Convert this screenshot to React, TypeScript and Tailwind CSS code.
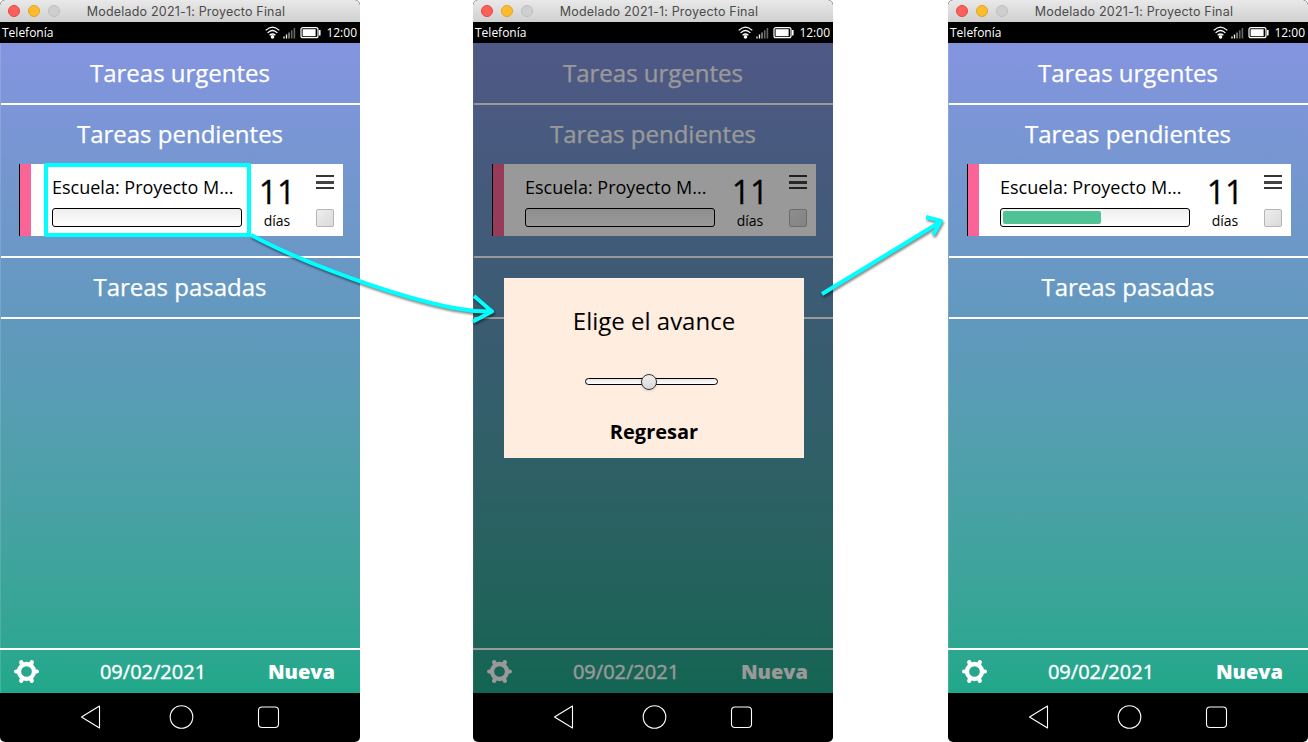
import type { ReactNode } from "react";

type PhoneProps = { progress?: number; dimmed?: boolean; highlighted?: boolean };

function TitleBar() {
  return (
    <div className="grid h-[22px] shrink-0 grid-cols-[69px_1fr_57px] items-center rounded-t-[5px] bg-linear-to-b from-[#e9e9e9] to-[#d0d0d0]">
      <div className="flex gap-2 pl-2">
        <span className="size-3 rounded-full border border-[#e14942] bg-[#fc605b]" />
        <span className="size-3 rounded-full border border-[#e1a325] bg-[#fdbc2e]" />
        <span className="size-3 rounded-full border border-[#bdbdbd] bg-[#cfcfcf]" />
      </div>
      <span className="h-[22px] text-center font-['Inter',sans-serif] text-[12.5px] leading-[24px] tracking-[0.19px] whitespace-nowrap text-[#4b4b4b]">
        Modelado 2021-1: Proyecto Final
      </span>
    </div>
  );
}

function StatusBar() {
  return (
    <div className="flex h-[21px] shrink-0 items-center bg-black pr-[3px] pl-[2px] text-[12px] leading-[21px] text-white">
      <span className="flex-1">Telefonía</span>
      <svg width="57" height="14" viewBox="0 0 57 14" className="mr-[4px]" fill="none" stroke="white">
        <path d="M.7 4.4Q7.5-2.2 14.3 4.4M2.6 6.9q4.900-4.700 9.800 0M4.600 9.300q2.900-2.600 5.800 0" strokeWidth="1.3" />
        <circle cx="7.5" cy="10.9" r="1.8" fill="white" stroke="none" />
        <path d="M19 12.5v-2M21.5 12.5V8.5" strokeWidth="1.3" />
        <path d="M24 12.5V6.5" strokeWidth="1.3" stroke="#aaa" />
        <path d="M26.7 12.5V4.2M29.4 12.5V2" strokeWidth="1.6" stroke="#666" />
        <rect x="36" y="1.7" width="17" height="10" rx="2" strokeWidth="1.2" />
        <rect x="37.6" y="3.2" width="13" height="7" fill="white" stroke="none" />
        <path d="M54.8 4v5.5" strokeWidth="1.6" />
      </svg>
      <span>12:00</span>
    </div>
  );
}

function SectionTitle({ children }: { children: ReactNode }) {
  return (
    <h2 className="-ml-px h-[59px] text-center text-[24px] leading-[57px] text-white [-webkit-text-stroke:0.25px_#fff]">
      {children}
    </h2>
  );
}

function Task({ progress, highlighted }: { progress: number; highlighted: boolean }) {
  return (
    <div className="ml-[18px] flex h-[72px] w-[324px] border-l border-black bg-white text-black">
      <div className="w-[11px] bg-[#fb6496]" />
      <div className="relative ml-[13px] h-[72px] w-[207px] pt-[10px] pl-2">
        <p className="h-[26px] text-[18px] leading-[26px] whitespace-nowrap">Escuela: Proyecto M...</p>
        <div className="mt-[8px] h-[19px] w-[190px] rounded-[3px] border border-black bg-linear-to-b from-[#eeeeee] to-white p-[2px]">
          <div className="h-full rounded-[2px] bg-[#50c396]" style={{ width: `${progress}%` }} />
        </div>
        {highlighted && <div className="absolute -top-px inset-x-0 h-[74px] rounded-[2px] border-4 border-[#00ffff]" />}
      </div>
      <div className="flex w-[52px] flex-col items-center pt-[7px]">
        <span className="h-[40px] text-[32px] leading-[41px] [-webkit-text-stroke:0.3px_#000]">11</span>
        <span className="text-[14px] leading-5">días</span>
      </div>
      <div className="flex w-[40px] flex-col items-end pt-[11px] pr-[9px]">
        <div className="flex h-[14px] w-[18px] flex-col">
          <span className="h-[2px] bg-[#363636]" />
          <span className="mt-[4px] h-[3px] bg-[#444]" />
          <span className="mt-[3px] h-[2px] bg-[#363636]" />
        </div>
        <div className="mt-5 size-[18px] rounded-[2px] border border-[#b5b5b5] bg-linear-to-br from-[#eeeeee] to-[#dadada]" />
      </div>
    </div>
  );
}

function Gear() {
  return (
    <svg width="26" height="26" viewBox="-13.5 -12.5 26 26" fill="none" stroke="white">
      <circle r="7.5" strokeWidth="4.3" />
      <path
        d="M-9 0h-1.400M9 0h1.400M4.800 8.300l.5 1M-4.800-8.300l-.5-1M4.800-8.300l.5-1M-4.800 8.300l-.5 1"
        strokeWidth="4.2"
        strokeLinecap="round"
      />
    </svg>
  );
}

function AdvanceDialog() {
  return (
    <div className="absolute top-[235px] left-[31px] flex h-[180px] w-[300px] flex-col items-center bg-[#ffeddf] pt-[25px] text-black">
      <h3 className="h-[36px] text-[24px] leading-[36px]">Elige el avance</h3>
      <div className="relative mt-[39px] mr-[5px] h-[7px] w-[133px] rounded-full border border-black bg-linear-to-b from-[#e8e8e8] to-white">
        <span className="absolute -top-[5px] left-[55px] size-4 rounded-full border border-[#333] bg-linear-to-b from-[#eeeeee] to-[#d8d8d8] shadow-[0_1px_3px_#0002]" />
      </div>
      <button className="mt-[33px] text-[20px] leading-7 font-bold">Regresar</button>
    </div>
  );
}

function Phone({ progress = 0, dimmed = false, highlighted = false }: PhoneProps) {
  return (
    <section className="flex h-[742px] w-[360px] flex-col overflow-hidden rounded-[5px] bg-black">
      <TitleBar />
      <StatusBar />
      <main className="relative flex h-[650px] shrink-0 flex-col bg-linear-to-b from-[#8494df] via-[#6199be] via-43% to-[#20a88a] pl-px shadow-[inset_1px_0_#ffffff22]">
        <div className="border-b-2 border-white pt-[1px]">
          <SectionTitle>Tareas urgentes</SectionTitle>
        </div>
        <div className="h-[153px] border-b-2 border-white">
          <SectionTitle>Tareas pendientes</SectionTitle>
          <Task progress={progress} highlighted={highlighted} />
        </div>
        <div className="border-b-2 border-white">
          <SectionTitle>Tareas pasadas</SectionTitle>
        </div>
        <div className="flex-1" />
        <footer className="-ml-px grid h-[45px] grid-cols-[1fr_107px_1fr] items-center border-t-2 border-white pr-[25px] pl-[13px] text-[20px] text-white">
          <Gear />
          <span className="-ml-[21px] mr-[21px] text-center whitespace-nowrap [-webkit-text-stroke:0.4px_#fff]">09/02/2021</span>
          <span className="text-right font-extrabold">Nueva</span>
        </footer>
        {dimmed && <div className="absolute inset-0 bg-black/40" />}
        {dimmed && <AdvanceDialog />}
      </main>
      <nav className="flex flex-1 items-center justify-center pb-[2px]">
        <svg width="200" height="30" viewBox="0 0 200 30" fill="none" stroke="white" strokeWidth="1.1" strokeLinejoin="round">
          <path d="m1.5 15 18-11v22Z" />
          <circle cx="101.5" cy="15" r="11.3" />
          <rect x="178.5" y="5" width="20" height="20.5" rx="3.5" />
        </svg>
      </nav>
    </section>
  );
}

export default function App() {
  return (
    <div className="relative flex h-[742px] w-[1308px] overflow-hidden bg-white font-['Open_Sans','Noto_Sans',sans-serif]">
      <div className="mr-[113px]"><Phone highlighted /></div>
      <div className="mr-[115px]"><Phone dimmed /></div>
      <Phone progress={53} />
      <svg
        className="pointer-events-none absolute inset-0 drop-shadow-[1px_2px_1px_#0007]"
        width="1308"
        height="742"
        viewBox="0 0 1308 742"
        fill="none"
        stroke="#00ffff"
        strokeWidth="4"
        strokeLinejoin="round"
      >
        <path d="M251 235C305 264 400 298 454 308Q472 311.500 490 311.500M474 296l18 15.500-19 10" />
        <path d="M822 294 941 221.500M926 217l15 4-8 14" />
      </svg>
    </div>
  );
}
